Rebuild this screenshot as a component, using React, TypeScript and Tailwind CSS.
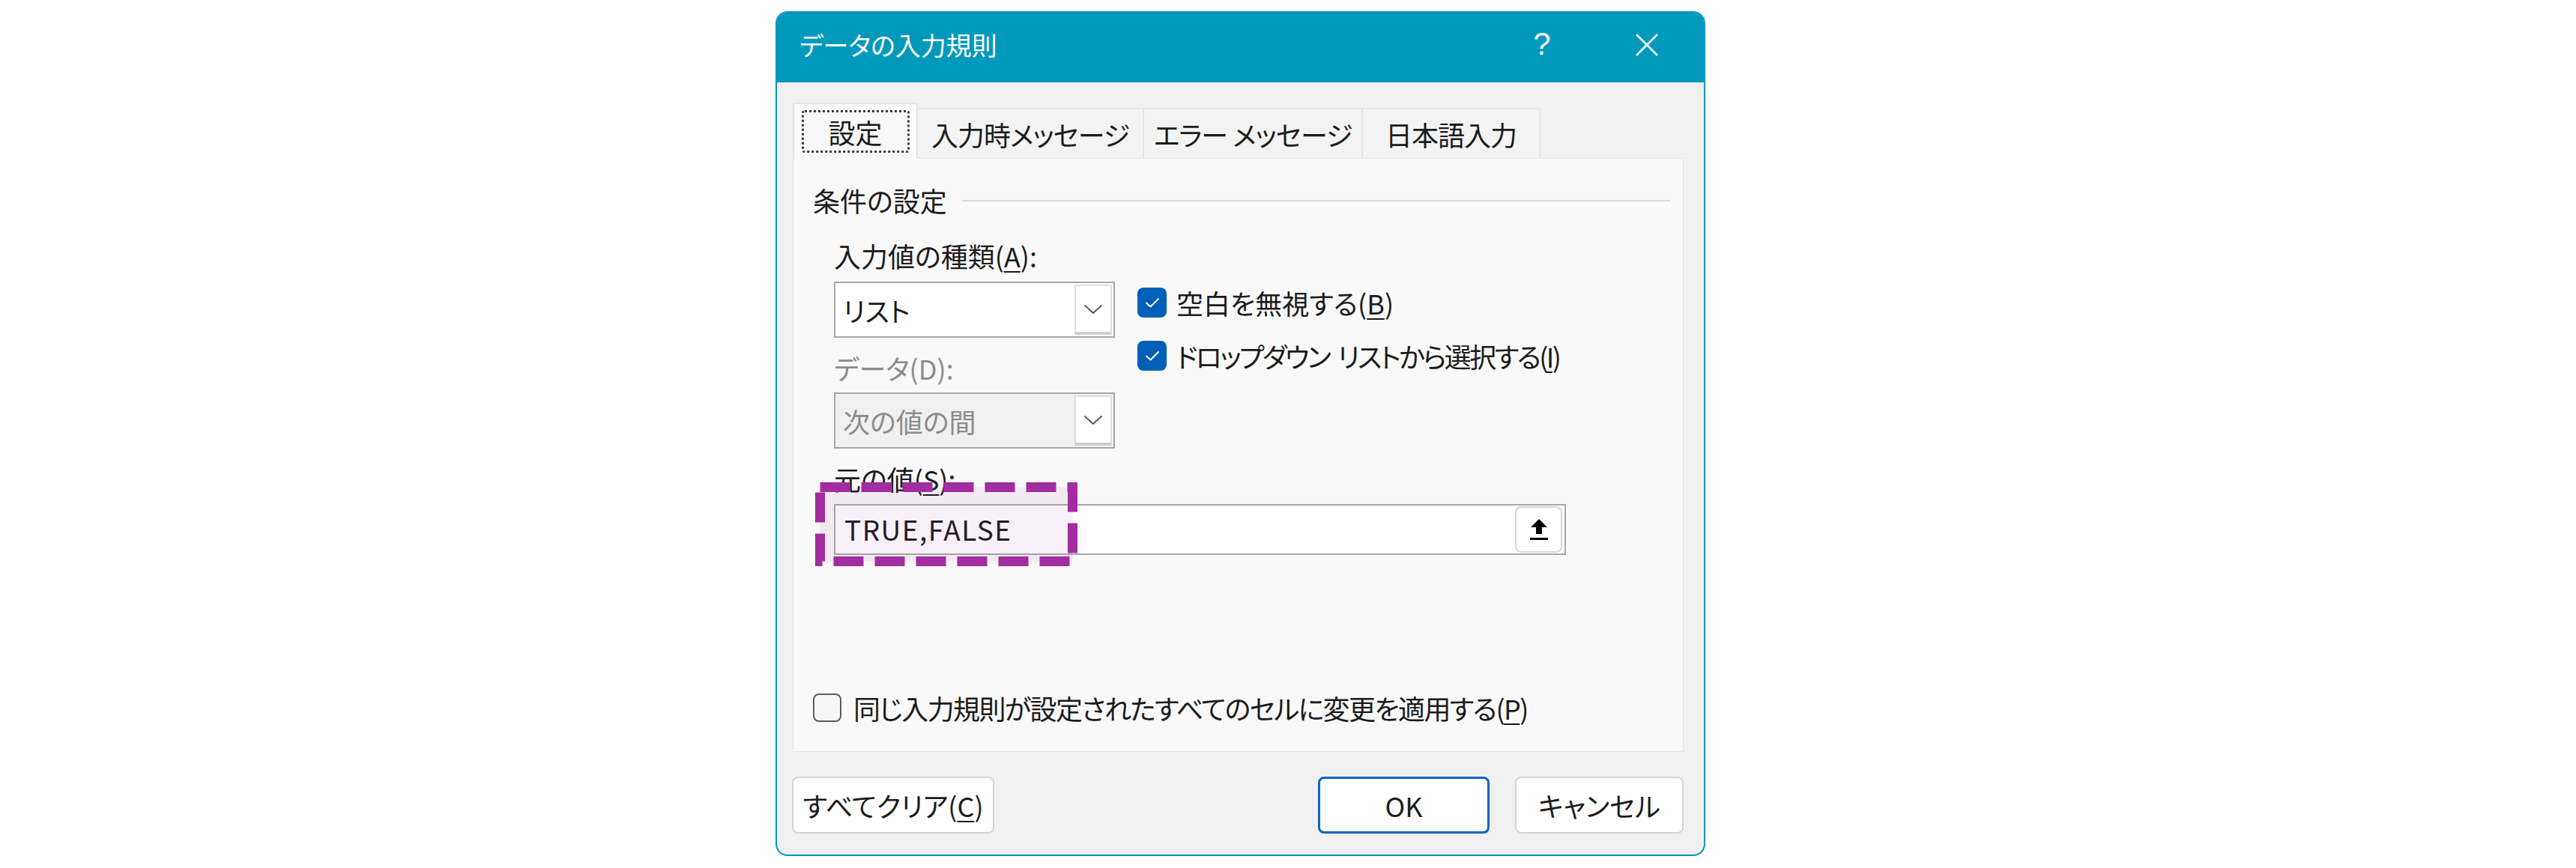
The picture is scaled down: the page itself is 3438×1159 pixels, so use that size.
import React from 'react';

const jp = "[font-family:'Noto_Sans_CJK_JP','Noto_Sans',sans-serif] [font-feature-settings:'palt']";

const Check = () => (
  <div className="w-[39px] h-[40px] rounded-[8px] bg-[#005fb8] flex items-center justify-center shrink-0">
    <svg width="22" height="18" viewBox="0 0 22 18" fill="none">
      <polyline points="3,9.5 8.5,14.5 19,4" stroke="#ffffff" strokeWidth="2" strokeLinecap="round" strokeLinejoin="round" />
    </svg>
  </div>
);

const Chevron = () => (
  <svg width="26" height="14" viewBox="0 0 26 14" fill="none">
    <polyline points="2,2 13,12 24,2" stroke="#5a5a5a" strokeWidth="2" strokeLinecap="round" strokeLinejoin="round" />
  </svg>
);

const Combo = ({ value, disabled }: { value: string; disabled?: boolean }) => (
  <div className={`w-[375px] h-[75px] border-2 border-[#a8a8a8] flex items-stretch ${disabled ? 'bg-[#f0f0f0]' : 'bg-white'}`}>
    <div className={`flex-1 flex items-center pl-[10px] text-[36px] ${disabled ? 'text-[#8c8c8c]' : 'text-[#1b1b1b]'}`}>{value}</div>
    <div className="w-[50px] my-[2px] mr-[2px] bg-white border-2 border-[#dedede] border-b-[4px] border-b-[#cfcfcf] flex items-center justify-center">
      <Chevron />
    </div>
  </div>
);

const Key = ({ k }: { k: string }) => <span className="underline underline-offset-[5px] decoration-[2px]">{k}</span>;

const tabs = [
  { label: '入力時メッセージ', w: 'w-[302px]' },
  { label: 'エラー メッセージ', w: 'w-[292px]' },
  { label: '日本語入力', w: 'w-[237px]' },
];

export default function App() {
  return (
    <div className={`w-[3438px] h-[1159px] bg-white pl-[1035px] pt-[15px] ${jp}`}>
      <div className="w-[1241px] h-[1128px] border-2 border-[#0099bc] rounded-[16px] overflow-hidden bg-[#f0f0f0] flex flex-col">
        {/* title bar */}
        <div className="h-[93px] bg-[#0099bc] flex items-center pl-[30px] pr-[26px] shrink-0">
          <span className="text-[34px] text-white flex-1 pb-[8px]">データの入力規則</span>
          <div className="w-[100px] mr-[40px] flex justify-center text-white text-[42px] font-light pb-[10px] [font-family:'Liberation_Sans',sans-serif]">?</div>
          <div className="w-[100px] flex justify-center pb-[8px]">
            <svg width="32" height="32" viewBox="0 0 32 32">
              <line x1="2" y1="2" x2="30" y2="30" stroke="#ffffff" strokeWidth="2.5" />
              <line x1="30" y1="2" x2="2" y2="30" stroke="#ffffff" strokeWidth="2.5" />
            </svg>
          </div>
        </div>

        {/* tabs */}
        <div className="flex items-end pl-[21px] mt-[27px] h-[74px] shrink-0 relative z-10">
          <div className="w-[167px] h-[75px] -mb-px bg-[#f9f9f9] border-2 border-b-0 border-[#e3e3e3] rounded-t-[3px] flex items-center justify-center">
            <div className="w-[144px] h-[57px] border-[3px] border-dotted border-[#3a3a3a] rounded-[4px] flex items-center justify-center text-[36px] text-[#1b1b1b]">設定</div>
          </div>
          {tabs.map((t) => (
            <div key={t.label} className={`${t.w} h-[67px] bg-[#f3f3f3] border-2 border-b-0 border-l-0 border-[#e4e4e4] flex items-center justify-center text-[36px] tracking-[-1px] text-[#1b1b1b]`}>
              {t.label}
            </div>
          ))}
        </div>

        {/* panel */}
        <div className="ml-[21px] w-[1189px] h-[793px] bg-[#f9f9f9] border border-[#e3e3e3] flex flex-col shrink-0 text-[36px] text-[#1b1b1b]">
          <div className="mt-[35px] h-[40px] pl-[26px] pr-[17px] flex items-center">
            <span className="leading-none">条件の設定</span>
            <div className="flex-1 h-[2px] bg-[#dcdcdc] ml-[20px] mt-[2px]" />
          </div>

          <div className="mt-[34px] h-[40px] pl-[54px] flex items-center">
            <span>入力値の種類(<Key k="A" />):</span>
          </div>

          <div className="pl-[54px] flex mt-[15px]">
            <div className="flex flex-col">
              <Combo value="リスト" />
              <div className="mt-[20px] h-[40px] flex items-center text-[#8c8c8c]">データ(D):</div>
              <div className="mt-[13px]">
                <Combo value="次の値の間" disabled />
              </div>
            </div>
            <div className="flex flex-col ml-[30px]">
              <div className="mt-[8px] h-[40px] flex items-center gap-[13px]">
                <Check />
                <span>空白を無視する(<Key k="B" />)</span>
              </div>
              <div className="mt-[31px] h-[40px] flex items-center gap-[13px]">
                <Check />
                <span className="tracking-[-2.6px]">ドロップダウン</span>
                <span className="tracking-[-2.6px] -ml-[2px]">リストから選択する(<Key k="I" />)</span>
              </div>
            </div>
          </div>

          <div className="mt-[20px] h-[40px] pl-[54px] flex items-center">
            <span>元の値(<Key k="S" />):</span>
          </div>

          <div className="mt-[14px] ml-[54px] relative w-[977px] h-[68px]">
            <div className="w-full h-full bg-white border-2 border-[#a8a8a8] flex items-center">
              <span className="flex-1 pl-[12px] text-[37px] tracking-[0.04em]">TRUE,FALSE</span>
              <div className="w-[63px] h-[62px] mr-[3px] bg-white border-2 border-[#d6d6d6] rounded-[8px] flex items-center justify-center">
                <svg width="28" height="32" viewBox="0 0 28 32">
                  <path d="M14 2 L25 13 L18 13 L18 22 L10 22 L10 13 L3 13 Z" fill="#000000" />
                  <rect x="2" y="27" width="24" height="3" fill="#000000" />
                </svg>
              </div>
            </div>
            {/* highlight */}
            <svg className="absolute left-[-25px] top-[-29px] z-20" width="350" height="112" viewBox="0 0 350 112">
              <rect x="6.5" y="6.5" width="337" height="99" fill="rgba(162,44,160,0.07)" stroke="#a22ca0" strokeWidth="13" strokeDasharray="40 15" />
            </svg>
          </div>

          <div className="mt-[184px] h-[40px] pl-[26px] flex items-center gap-[16px]">
            <div className="w-[38px] h-[38px] rounded-[8px] border-2 border-[#5c5c5c] bg-[#f7f7f7]" />
            <span className="tracking-[-1.6px]">同じ入力規則が設定されたすべてのセルに変更を適用する(<Key k="P" />)</span>
          </div>
        </div>

        {/* buttons */}
        <div className="flex mt-[33px] pl-[20px] pr-[27px] text-[36px] text-[#1b1b1b]">
          <button className="w-[270px] h-[76px] bg-white border-2 border-[#d4d4d4] rounded-[8px] flex items-center justify-center">
            すべてクリア(<Key k="C" />)
          </button>
          <div className="flex-1" />
          <button className="w-[229px] h-[76px] bg-white border-[3px] border-[#0067c0] rounded-[8px] flex items-center justify-center">
            OK
          </button>
          <button className="w-[225px] h-[76px] ml-[34px] bg-white border-2 border-[#d4d4d4] rounded-[8px] flex items-center justify-center">
            キャンセル
          </button>
        </div>
      </div>
    </div>
  );
}
